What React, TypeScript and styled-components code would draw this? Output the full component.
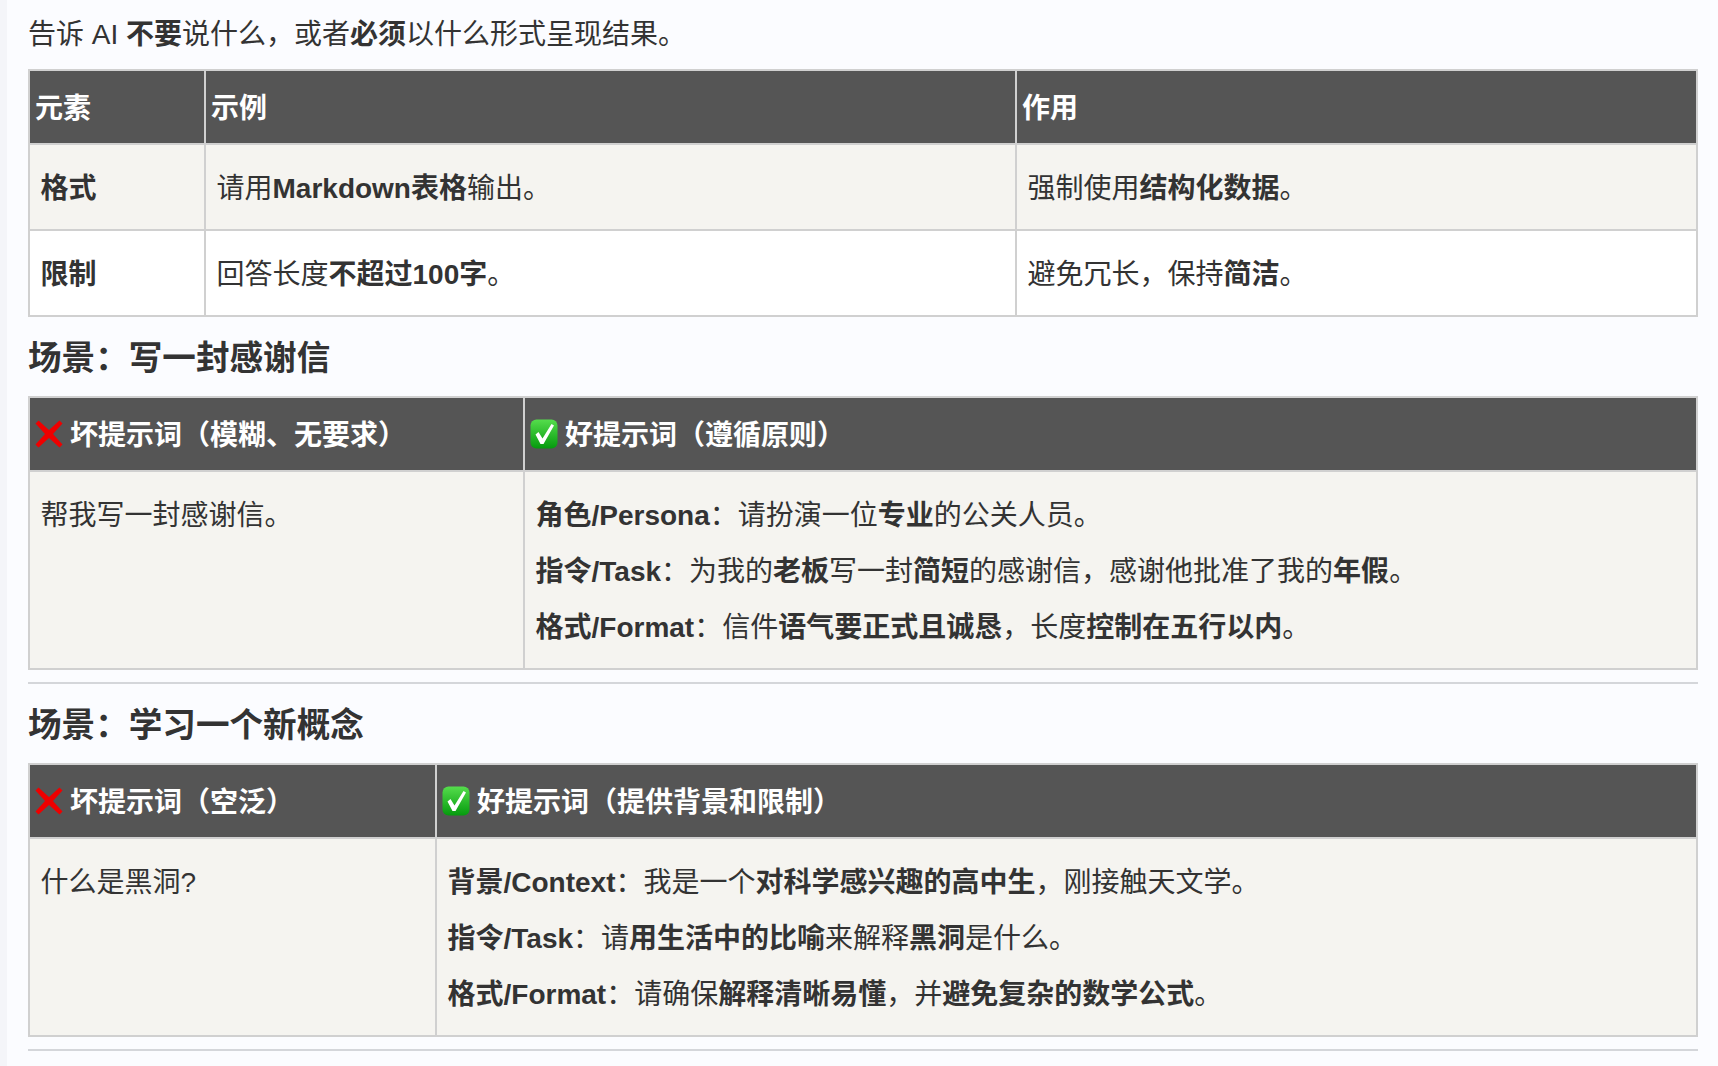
import React from "react";
import styled, { createGlobalStyle } from "styled-components";

const Global = createGlobalStyle`
  html, body { margin: 0; padding: 0; background: #fbfcff; }
  body { font-family: "Liberation Sans", "Noto Sans CJK SC", sans-serif; color: #333; overflow: hidden; }
`;

const Page = styled.div`
  width: 1718px;
  height: 1066px;
  overflow: hidden;
  box-sizing: border-box;
  display: flex;
  background: #fbfcff;
`;

const Rail = styled.div`
  width: 7px;
  flex: none;
  background: #f4f5f9;
`;

const Content = styled.main`
  width: 1670px;
  margin-left: 21px;
  flex: none;
`;

const Intro = styled.p`
  margin: 0;
  padding-top: 15px;
  height: 54px;
  box-sizing: content-box;
  font-size: 28px;
  line-height: 40px;
`;

const Heading = styled.h3`
  margin: 0;
  font-size: 33.6px;
  line-height: 46px;
  font-weight: 700;
  color: #333;
`;

const Table = styled.table`
  width: 1668px;
  table-layout: fixed;
  border-collapse: collapse;
  border: 2px solid #d0d0d0;
  font-size: 28px;
`;

const Th = styled.th`
  height: 74px;
  padding: 4px 5px 0;
  box-sizing: border-box;
  background: #555;
  color: #fff;
  font-weight: 700;
  text-align: left;
  line-height: 40px;
  font-size: 28px;
  border: 2px solid #d0d0d0;
  white-space: nowrap;
`;

const HeadInner = styled.span`
  display: flex;
  align-items: center;
  gap: 7px;
  margin-top: -4px;
`;

const HeadLabel = styled.span`
  padding-top: 4px;
`;

const Tr = styled.tr<{ $alt?: boolean }>`
  background: ${(p) => (p.$alt ? "#f5f4f0" : "#fff")};
`;

const Td = styled.td`
  padding: 16px 10.5px 12px;
  border: 2px solid #d0d0d0;
  vertical-align: top;
  line-height: 56px;
  color: #333;
  white-space: nowrap;
`;

const Line = styled.div``;

const Rule = styled.hr<{ $top: number }>`
  margin: ${(p) => p.$top}px 0 0;
  border: 0;
  height: 2px;
  background: #d4d6da;
`;

const Gap = styled.div<{ $h: number }>`
  height: ${(p) => p.$h}px;
`;

const Cross = () => (
  <svg width="28" height="28" viewBox="0 0 28 28">
    <path
      d="M3.500 0.500 14 10 24.500 0.500 27.500 3.500 18 14 27.500 24.500 24.500 27.500 14 18 3.500 27.500 0.500 24.500 10 14 0.500 3.500Z"
      fill="#ee0000"
    />
  </svg>
);

const Check = () => (
  <svg width="28" height="30" viewBox="0 0 28 30">
    <defs>
      <linearGradient id="g" x1="0" y1="0" x2="0" y2="1">
        <stop offset="0" stopColor="#55dd4c" />
        <stop offset="1" stopColor="#059a0e" />
      </linearGradient>
    </defs>
    <rect x="0.500" y="0.500" width="27" height="29" rx="6" fill="url(#g)" />
    <path d="M5.500 15.500 8.500 13 12.500 19.500 21.500 5 24 6.500 13.500 25 10.500 25Z" fill="#fff" />
  </svg>
);

const Colgroup = ({ cols }: { cols: number[] }) => (
  <colgroup>
    {cols.map((w) => (
      <col key={w} width={w} />
    ))}
  </colgroup>
);

export default function App() {
  return (
    <Page>
      <Global />
      <Rail />
      <Content>
        <Intro>
          告诉 AI <b>不要</b>说什么，或者<b>必须</b>以什么形式呈现结果。
        </Intro>
        <Table>
          <Colgroup cols={[176, 811, 681]} />
          <thead>
            <tr>
              <Th>元素</Th>
              <Th>示例</Th>
              <Th>作用</Th>
            </tr>
          </thead>
          <tbody>
            <Tr $alt>
              <Td><b>格式</b></Td>
              <Td>请用<b>Markdown表格</b>输出。</Td>
              <Td>强制使用<b>结构化数据</b>。</Td>
            </Tr>
            <Tr>
              <Td><b>限制</b></Td>
              <Td>回答长度<b>不超过100字</b>。</Td>
              <Td>避免冗长，保持<b>简洁</b>。</Td>
            </Tr>
          </tbody>
        </Table>
        <Gap $h={19} />
        <Heading>场景：写一封感谢信</Heading>
        <Gap $h={14} />
        <Table>
          <Colgroup cols={[495, 1173]} />
          <thead>
            <tr>
              <Th><HeadInner><Cross /><HeadLabel>坏提示词（模糊、无要求）</HeadLabel></HeadInner></Th>
              <Th><HeadInner><Check /><HeadLabel>好提示词（遵循原则）</HeadLabel></HeadInner></Th>
            </tr>
          </thead>
          <tbody>
            <Tr $alt>
              <Td>帮我写一封感谢信。</Td>
              <Td>
                <Line><b>角色/Persona</b>：请扮演一位<b>专业</b>的公关人员。</Line>
                <Line><b>指令/Task</b>：为我的<b>老板</b>写一封<b>简短</b>的感谢信，感谢他批准了我的<b>年假</b>。</Line>
                <Line><b>格式/Format</b>：信件<b>语气要正式且诚恳</b>，长度<b>控制在五行以内</b>。</Line>
              </Td>
            </Tr>
          </tbody>
        </Table>
        <Rule $top={12} />
        <Gap $h={19} />
        <Heading>场景：学习一个新概念</Heading>
        <Gap $h={14} />
        <Table>
          <Colgroup cols={[407, 1261]} />
          <thead>
            <tr>
              <Th><HeadInner><Cross /><HeadLabel>坏提示词（空泛）</HeadLabel></HeadInner></Th>
              <Th><HeadInner><Check /><HeadLabel>好提示词（提供背景和限制）</HeadLabel></HeadInner></Th>
            </tr>
          </thead>
          <tbody>
            <Tr $alt>
              <Td>什么是黑洞?</Td>
              <Td>
                <Line><b>背景/Context</b>：我是一个<b>对科学感兴趣的高中生</b>，刚接触天文学。</Line>
                <Line><b>指令/Task</b>：请<b>用生活中的比喻</b>来解释<b>黑洞</b>是什么。</Line>
                <Line><b>格式/Format</b>：请确保<b>解释清晰易懂</b>，并<b>避免复杂的数学公式</b>。</Line>
              </Td>
            </Tr>
          </tbody>
        </Table>
        <Rule $top={12} />
      </Content>
    </Page>
  );
}
